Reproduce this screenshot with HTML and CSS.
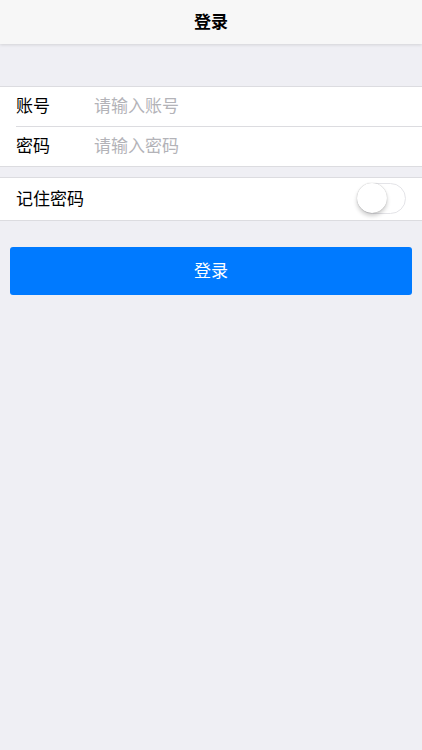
FILE: index.html
```html
<!DOCTYPE html>
<html lang="zh">
<head>
<meta charset="utf-8">
<link rel="stylesheet" href="styles.css">
</head>
<body>
<header class="navbar"><span class="nav-title">登录</span></header>
<main class="content">
  <section class="group first">
    <div class="row">
      <span class="label">账号</span>
      <input class="field" type="text" placeholder="请输入账号">
    </div>
    <div class="sep"></div>
    <div class="row">
      <span class="label">密码</span>
      <input class="field" type="password" placeholder="请输入密码">
    </div>
  </section>
  <section class="group second">
    <div class="row tall">
      <span class="label">记住密码</span>
      <span class="switch"><span class="knob"></span></span>
    </div>
  </section>
  <button class="login-btn">登录</button>
</main>
</body>
</html>
```
FILE: styles.css
```css
* { box-sizing: border-box; }
html, body { margin: 0; padding: 0; }
body {
  width: 422px;
  height: 750px;
  background: #efeff4;
  font-family: "Noto Sans CJK SC", "Noto Sans", sans-serif;
  overflow: hidden;
}
.navbar {
  height: 44px;
  background: #f7f7f7;
  display: flex;
  align-items: center;
  justify-content: center;
  padding-bottom: 3px;
  box-shadow: 0 1px 3px rgba(0,0,0,0.12);
  position: relative;
  z-index: 1;
}
.nav-title {
  font-size: 17px;
  font-weight: 700;
  color: #000;
  line-height: 1;
}
.content {
  padding-top: 42px;
}
.group {
  background: #fff;
  border-top: 1px solid #dcdce0;
  border-bottom: 1px solid #dcdce0;
}
.second { margin-top: 10px; }
.row {
  height: 39px;
  display: flex;
  align-items: center;
  padding: 0 16px 2px;
}
.row.tall { height: 42px; padding-bottom: 1px; }
.sep {
  height: 1px;
  background: #dcdce0;
  margin-left: 16px;
}
.label {
  font-size: 17px;
  color: #000;
  width: 78px;
  flex: none;
  line-height: 1.2;
}
.tall .label { flex: 1; }
.field {
  border: 0;
  outline: none;
  font-family: inherit;
  font-size: 17px;
  line-height: 1.2;
  padding: 0;
  flex: 1;
  background: transparent;
  color: #000;
}
.field::placeholder { color: #b3b3b8; }
.switch {
  width: 49px;
  height: 31px;
  border-radius: 16px;
  border: 1.5px solid #e4e4e8;
  background: #fff;
  position: relative;
  margin-right: 0;
  flex: none;
}
.knob {
  position: absolute;
  left: -1px;
  top: -1px;
  width: 30px;
  height: 30px;
  border-radius: 50%;
  background: #fff;
  box-shadow: 0 3px 4px rgba(0,0,0,0.2), 0 0 1px rgba(0,0,0,0.3);
}
.login-btn {
  display: block;
  margin: 26px 10px 0;
  width: 402px;
  height: 48px;
  border: 0;
  border-radius: 3px;
  background: #007aff;
  color: #fff;
  font-family: inherit;
  font-size: 17px;
  line-height: 1;
  padding: 0 0 3px;
}
```
